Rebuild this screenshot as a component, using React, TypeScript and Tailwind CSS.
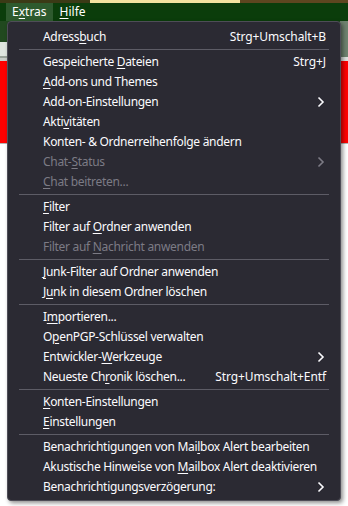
import { ReactNode } from "react";

type Item =
  | { sep: true }
  | {
      sep?: false;
      label: ReactNode;
      shortcut?: string;
      sub?: boolean;
      disabled?: boolean;
    };

// underline the access key
const u = (before: string, key: string, after: string) => (
  <>
    {before}
    <span className="underline underline-offset-[2px]">{key}</span>
    {after}
  </>
);

const items: Item[] = [
  { label: u("Adress", "b", "uch"), shortcut: "Strg+Umschalt+B" },
  { sep: true },
  { label: u("Gespeicherte ", "D", "ateien"), shortcut: "Strg+J" },
  { label: u("", "A", "dd-ons und Themes") },
  { label: "Add-on-Einstellungen", sub: true },
  { label: u("Akti", "v", "itäten") },
  { label: "Konten- & Ordnerreihenfolge ändern" },
  { label: u("Chat-", "S", "tatus"), sub: true, disabled: true },
  { label: u("", "C", "hat beitreten..."), disabled: true },
  { sep: true },
  { label: u("", "F", "ilter") },
  { label: u("Filter auf ", "O", "rdner anwenden") },
  { label: u("Filter auf ", "N", "achricht anwenden"), disabled: true },
  { sep: true },
  { label: u("", "J", "unk-Filter auf Ordner anwenden") },
  { label: u("J", "u", "nk in diesem Ordner löschen") },
  { sep: true },
  { label: u("I", "m", "portieren...") },
  { label: u("O", "p", "enPGP-Schlüssel verwalten") },
  { label: u("Entwickler-", "W", "erkzeuge"), sub: true },
  { label: u("Neueste Ch", "r", "onik löschen..."), shortcut: "Strg+Umschalt+Entf" },
  { sep: true },
  { label: u("", "K", "onten-Einstellungen") },
  { label: u("", "E", "instellungen") },
  { sep: true },
  { label: u("Benachrichtigungen von Mai", "l", "box Alert bearbeiten") },
  { label: u("Akustische Hinweise von ", "M", "ailbox Alert deaktivieren") },
  { label: "Benachrichtigungsverzögerung:", sub: true },
];

function Chevron({ dim }: { dim?: boolean }) {
  return (
    <svg
      width="8"
      height="12"
      viewBox="0 0 8 12"
      fill="none"
      stroke="currentColor"
      strokeWidth="1.6"
      className={dim ? "text-[#7c7b85]" : "text-[#fbfbfe]"}
    >
      <path d="M1.5 1.5 6 6l-4.5 4.5" />
    </svg>
  );
}

export default function App() {
  return (
    <div className="relative w-[348px] h-[506px] overflow-hidden bg-white font-['Noto_Sans',sans-serif] text-[12px]">
      {/* app behind the menu */}
      <div className="flex h-[3px]">
        <div className="w-[90px] bg-[#3b3a16]" />
        <div className="w-[150px] bg-[#f3e3a0]" />
        <div className="flex-1 bg-[#5e4620]" />
      </div>
      <div className="flex h-[18px] items-stretch bg-[#0b3d0b] text-white">
        <div className="ml-[6px] flex items-center bg-[#2e5a2e] px-[6px]">
          {u("E", "x", "tras")}
        </div>
        <div className="ml-[7px] flex items-center">{u("", "H", "ilfe")}</div>
      </div>
      <div className="flex h-[40px]">
        <div className="flex flex-1 flex-col">
          <div className="h-[21px] bg-[#21491f]" />
          <div className="h-[14px] bg-[#dfe5df]" />
          <div className="h-[2px] bg-[#9aa39a]" />
          <div className="flex-1 bg-[#c8cdc8]" />
        </div>
        <div className="flex w-[8px] flex-col">
          <div className="h-[36px] bg-[#6f836f]" />
          <div className="flex-1 bg-[#dfe3df]" />
        </div>
      </div>
      <div className="h-[82px] bg-[#ff0000]" />
      <div className="h-px bg-[#b5b5b5]" />

      {/* Extras menu */}
      <div className="absolute left-[7px] top-[21px] w-[334px] rounded-[4px] border border-[#4e4d57] bg-[#2b2a33] pt-[5px] pb-[3px] text-[#fbfbfe] shadow-[2px_2px_4px_rgba(0,0,0,0.45)]">
        {items.map((it, i) =>
          it.sep ? (
            <div key={i} className="mx-[11px] my-[2px] h-px bg-[#5d5c66]" />
          ) : (
            <div
              key={i}
              className={`flex h-[20px] items-center pl-[35px] pr-[14px] ${
                it.disabled ? "text-[#7c7b85]" : ""
              }`}
            >
              <span className="flex-1 whitespace-nowrap tracking-[-0.3px]">{it.label}</span>
              {it.shortcut && (
                <span className="whitespace-nowrap tracking-[-0.1px]">{it.shortcut}</span>
              )}
              {it.sub && (
                <span className="mr-[1px]">
                  <Chevron dim={it.disabled} />
                </span>
              )}
            </div>
          )
        )}
      </div>
    </div>
  );
}
